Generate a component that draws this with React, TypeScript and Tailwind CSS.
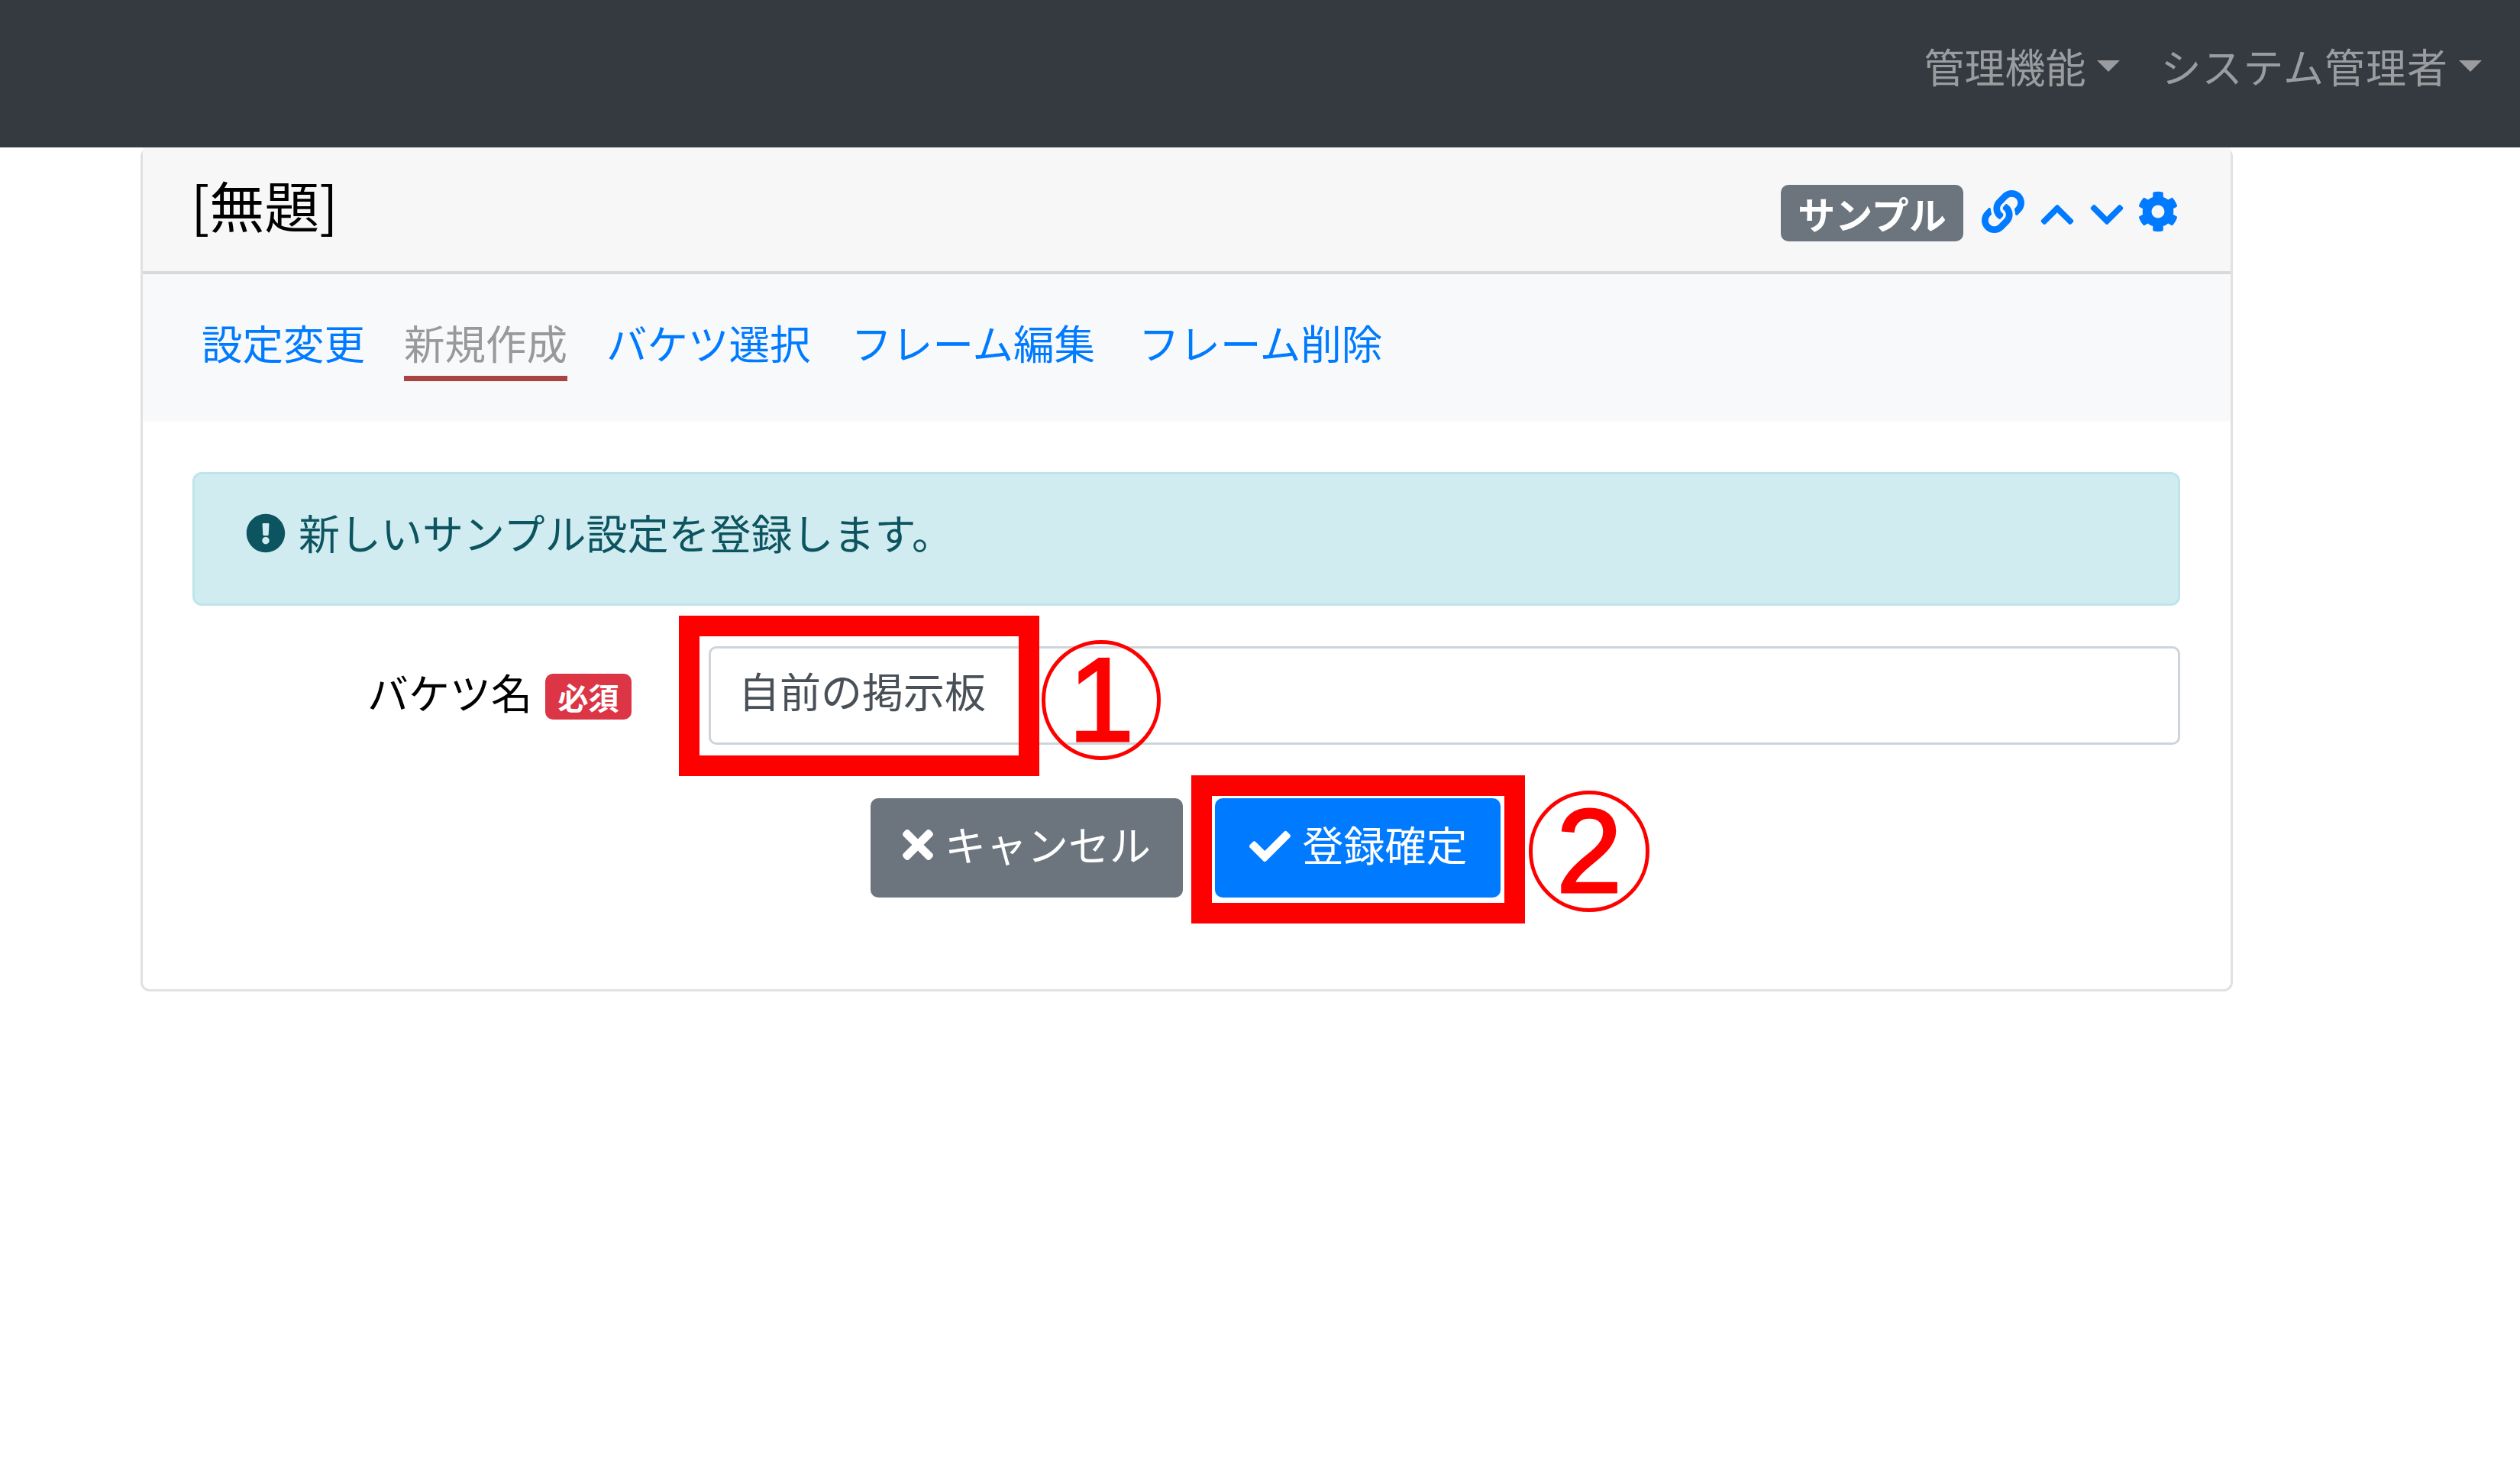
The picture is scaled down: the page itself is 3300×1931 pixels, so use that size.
import React from "react";
import { FaLink, FaChevronUp, FaChevronDown, FaCog, FaExclamationCircle, FaTimes, FaCheck } from "react-icons/fa";

const font = { fontFamily: '"Noto Sans CJK JP", "Noto Sans", sans-serif' };

function Caret() {
  return <span className="ml-[14px] inline-block h-0 w-0 border-x-[15px] border-t-[15px] border-x-transparent border-t-[#9a9c9f]" />;
}

function Tab({ children, active, className }: { children: React.ReactNode; active?: boolean; className?: string }) {
  return (
    <a className={`block h-[91px] pt-[5px] text-[53.5px] leading-[70px] whitespace-nowrap ${active ? "border-b-[7px] border-[#a94442] text-[#999999]" : "text-[#007bff]"} ${className ?? ""}`}>
      {children}
    </a>
  );
}

function Marker({ className, digit }: { className: string; digit: string }) {
  return (
    <div className={`absolute flex items-center justify-center rounded-full border-[5px] border-[#ff0000] text-[#ff0000] ${className}`}>
      <span className="text-[155px] leading-none font-normal [-webkit-text-stroke:3px_#ff0000]" style={{ fontFamily: '"Liberation Sans", sans-serif' }}>{digit}</span>
    </div>
  );
}

export default function App() {
  return (
    <div className="h-[1931px] w-[3300px] overflow-hidden bg-white font-normal" style={font}>
      <nav className="flex h-[193px] items-start justify-end bg-[#343a40] pr-[50px] pt-[50px] text-[53px] leading-[72px] text-[#9a9c9f]">
        <div className="flex items-center">管理機能<Caret /></div>
        <div className="ml-[54px] flex items-center tracking-[1px]">システム管理者<Caret /></div>
      </nav>

      <div className="ml-[184px] h-[1105px] w-[2740px] rounded-[12px] border-[3px] border-t-0 border-[#e1e1e1]">
        <header className="flex h-[166px] items-center justify-between border-b-[4px] border-[#d9d9d9] bg-[#f7f7f7] pl-[63px] pr-[68px]">
          <h5 className="-mt-[14px] text-[72px] leading-[90px] font-normal text-black">[無題]</h5>
          <div className="flex translate-y-[5px] items-center text-[#007bff]">
            <span className="flex h-[74px] w-[239px] items-center justify-center rounded-[10px] bg-[#6c757d] text-[49px] font-bold text-white">サンプル</span>
            <FaLink className="ml-[24px] h-[56px] w-[56px] -translate-y-[2px]" />
            <FaChevronUp className="ml-[21px] h-[50px] w-[44px] translate-y-[2px]" />
            <FaChevronDown className="ml-[21px] h-[50px] w-[44px] translate-y-[2px]" />
            <FaCog className="ml-[18px] h-[54px] w-[54px] -translate-y-[2px]" />
          </div>
        </header>

        <div className="flex h-[193px] items-start bg-[#f8f9fa] pl-[77px] pt-[49px]">
          <Tab>設定変更</Tab>
          <Tab active className="ml-[51px]">新規作成</Tab>
          <Tab className="ml-[51px]">バケツ選択</Tab>
          <Tab className="ml-[53px]">フレーム編集</Tab>
          <Tab className="ml-[57px]">フレーム削除</Tab>
        </div>

        <div className="pl-[65px] pr-[66px] pt-[66px]">
          <div className="flex h-[175px] items-start rounded-[12px] border-[3px] border-[#bee5eb] bg-[#d1ecf1] pl-[67px] pt-[40px] text-[54px] leading-[72px] text-[#0c5460]">
            <FaExclamationCircle className="mt-[11px] h-[52px] w-[52px]" />
            <span className="ml-[17px]">新しいサンプル設定を登録します。</span>
          </div>

          <div className="relative mt-[53px] flex h-[129px] items-center">
            <div className="flex w-[676px] items-center justify-end pr-[101px] text-[54px] leading-[72px] text-black">
              <span className="-mt-[10px]">バケツ名</span>
              <span className="ml-[17px] mt-[2px] flex h-[60px] w-[113px] items-center justify-center rounded-[10px] bg-[#dc3545] text-[40px] font-bold text-white">必須</span>
            </div>
            <div className="flex h-full flex-1 items-start rounded-[10px] border-[3px] border-[#ced4da] bg-white pl-[36px] pt-[19px] text-[54px] leading-[72px] text-[#495057]">
              自前の掲示板
            </div>
            <div className="absolute left-[637px] top-[-40px] h-[210px] w-[472px] border-[27px] border-[#ff0000]" />
            <Marker className="left-[1112px] top-[-8px] h-[157px] w-[156px]" digit="1" />
          </div>

          <div className="relative mt-[70px] flex justify-center gap-[42px] pr-[3px]">
            <button className="flex h-[130px] w-[409px] items-start justify-center rounded-[10px] bg-[#6c757d] pt-[24px] text-[54px] leading-[72px] text-white">
              <FaTimes className="mt-[8px] h-[58px] w-[42px]" />
              <span className="ml-[14px]">キャンセル</span>
            </button>
            <button className="flex h-[130px] w-[374px] items-start justify-center rounded-[10px] bg-[#007bff] pt-[24px] text-[54px] leading-[72px] text-white">
              <FaCheck className="mt-[12px] h-[54px] w-[58px]" />
              <span className="ml-[14px]">登録確定</span>
            </button>
            <div className="absolute left-[1308px] top-[-30px] h-[194px] w-[437px] border-[27px] border-[#ff0000]" />
            <Marker className="left-[1750px] top-[-10px] h-[159px] w-[158px]" digit="2" />
          </div>
        </div>
      </div>
    </div>
  );
}
